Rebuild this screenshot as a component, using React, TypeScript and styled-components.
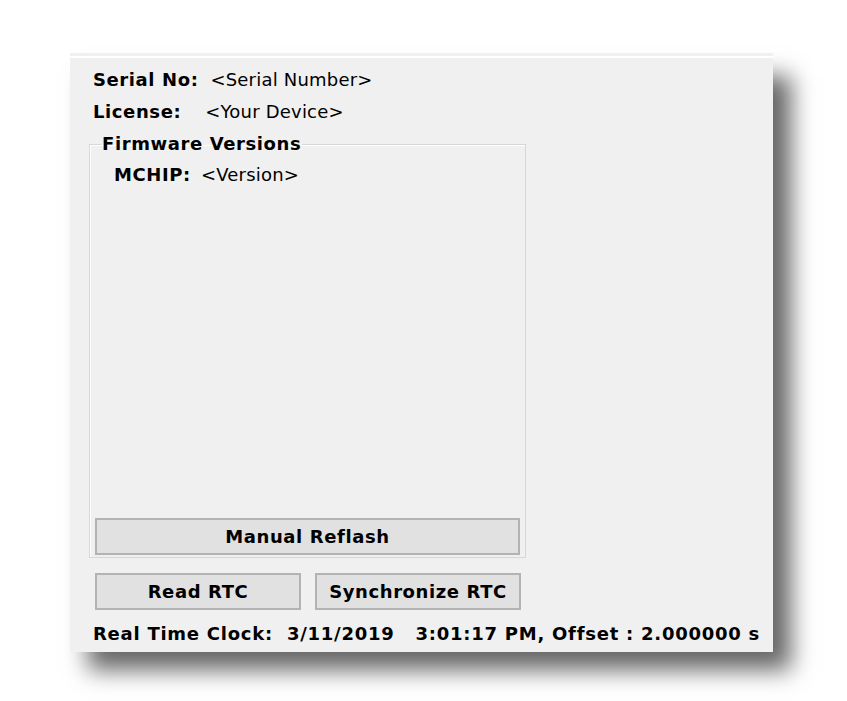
import React from "react";
import styled, { createGlobalStyle } from "styled-components";

const Global = createGlobalStyle`
  html, body { margin: 0; padding: 0; background: #ffffff; }
  body { font-family: "DejaVu Sans", Verdana, sans-serif; }
`;

const Page = styled.div`
  width: 847px;
  height: 701px;
  padding: 58px 0 0 70px;
  box-sizing: border-box;
`;

const Panel = styled.div`
  width: 703px;
  height: 594px;
  box-sizing: border-box;
  background: #f0f0f0;
  padding: 11px 0 0 19px;
  display: flex;
  flex-direction: column;
  box-shadow: 0 -2px 0 0 #ffffff, 0 -5px 0 0 #f0f0f0,
    18px 18px 22px rgba(0, 0, 0, 0.6);
  color: #000;
  font-size: 18px;
`;

const InfoRow = styled.div<{ $gap: number; $indent?: number }>`
  display: flex;
  align-items: center;
  height: 22px;
  line-height: 22px;
  margin-bottom: 10px;
  padding-left: ${(p) => p.$indent ?? 4}px;
  gap: ${(p) => p.$gap}px;
  white-space: nowrap;
`;

const Label = styled.span`
  font-weight: bold;
  letter-spacing: 0.6px;
`;

const Value = styled.span`
  font-weight: normal;
  letter-spacing: 0.2px;
`;

const Group = styled.fieldset`
  margin: 0;
  width: 437px;
  box-sizing: border-box;
  border: 1px solid #d7d7d7;
  box-shadow: inset 1px 1px 0 #ffffff;
  padding: 0 5px 2px 5px;
`;

const Legend = styled.legend`
  margin-left: 6px;
  padding: 0 1px;
  font-weight: bold;
  letter-spacing: 0.6px;
  line-height: 22px;
`;

const GroupBody = styled.div`
  height: 363px;
  box-sizing: border-box;
  padding: 9px 0 0 19px;
`;

const Button = styled.button<{ $width: number }>`
  display: block;
  width: ${(p) => p.$width}px;
  height: 37px;
  box-sizing: border-box;
  background: #e1e1e1;
  border: 2px solid #b3b3b3;
  font-family: "DejaVu Sans", Verdana, sans-serif;
  font-size: 18px;
  font-weight: bold;
  letter-spacing: 0.6px;
  color: #000;
  padding: 0;
`;

const ButtonRow = styled.div`
  display: flex;
  gap: 14px;
  padding: 15px 0 0 6px;
`;

const ClockRow = styled.div`
  margin-top: 13px;
  padding-left: 4px;
  font-weight: bold;
  letter-spacing: 0.75px;
  line-height: 22px;
  white-space: pre;
`;

export default function App() {
  return (
    <Page>
      <Global />
      <Panel>
        <InfoRow $gap={12}>
          <Label>Serial No:</Label>
          <Value>&lt;Serial Number&gt;</Value>
        </InfoRow>
        <InfoRow $gap={24}>
          <Label>License:</Label>
          <Value>&lt;Your Device&gt;</Value>
        </InfoRow>
        <Group>
          <Legend>Firmware Versions</Legend>
          <GroupBody>
            <InfoRow $gap={10} $indent={0}>
              <Label>MCHIP:</Label>
              <Value>&lt;Version&gt;</Value>
            </InfoRow>
          </GroupBody>
          <Button $width={425}>Manual Reflash</Button>
        </Group>
        <ButtonRow>
          <Button $width={206}>Read RTC</Button>
          <Button $width={206}>Synchronize RTC</Button>
        </ButtonRow>
        <ClockRow>{"Real Time Clock:  3/11/2019   3:01:17 PM, Offset : 2.000000 s"}</ClockRow>
      </Panel>
    </Page>
  );
}
